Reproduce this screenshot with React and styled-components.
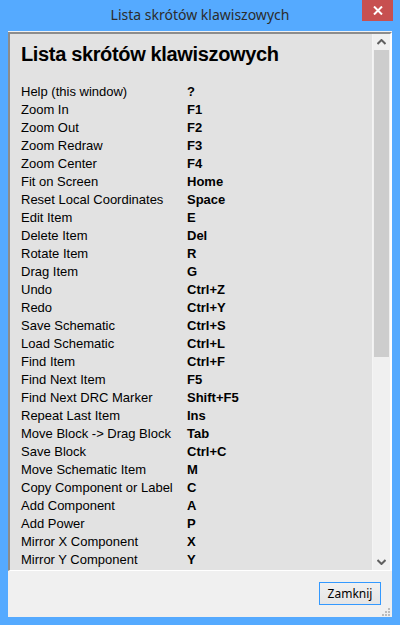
import React from "react";
import styled, { createGlobalStyle } from "styled-components";

const GlobalStyle = createGlobalStyle`
  html, body {
    margin: 0;
    padding: 0;
    background: #55aaff;
  }
  * {
    box-sizing: border-box;
  }
`;

const shortcuts = [
  ["Help (this window)", "?"],
  ["Zoom In", "F1"],
  ["Zoom Out", "F2"],
  ["Zoom Redraw", "F3"],
  ["Zoom Center", "F4"],
  ["Fit on Screen", "Home"],
  ["Reset Local Coordinates", "Space"],
  ["Edit Item", "E"],
  ["Delete Item", "Del"],
  ["Rotate Item", "R"],
  ["Drag Item", "G"],
  ["Undo", "Ctrl+Z"],
  ["Redo", "Ctrl+Y"],
  ["Save Schematic", "Ctrl+S"],
  ["Load Schematic", "Ctrl+L"],
  ["Find Item", "Ctrl+F"],
  ["Find Next Item", "F5"],
  ["Find Next DRC Marker", "Shift+F5"],
  ["Repeat Last Item", "Ins"],
  ["Move Block -> Drag Block", "Tab"],
  ["Save Block", "Ctrl+C"],
  ["Move Schematic Item", "M"],
  ["Copy Component or Label", "C"],
  ["Add Component", "A"],
  ["Add Power", "P"],
  ["Mirror X Component", "X"],
  ["Mirror Y Component", "Y"],
];

const App = () => {
  return (
    <>
      <GlobalStyle />
      <Window>
        <TitleBar>
          <span />
          <Title>Lista skrótów klawiszowych</Title>
          <CloseButton>
            <svg width="10" height="9" viewBox="0 0 10 9">
              <path d="M1 0.5 L9 8.5 M9 0.5 L1 8.5" stroke="#fff" strokeWidth="2" />
            </svg>
          </CloseButton>
        </TitleBar>

        <Client>
          <Panel>
            <Content>
              <Heading>Lista skrótów klawiszowych</Heading>
              <Table>
                {shortcuts.map(([label, key]) => (
                  <Row key={label}>
                    <Label>{label}</Label>
                    <Key>{key}</Key>
                  </Row>
                ))}
              </Table>
            </Content>
            <Scrollbar>
              <ScrollArrow>
                <svg width="9" height="6" viewBox="0 0 9 6">
                  <path d="M0.5 5 L4.5 1 L8.5 5" stroke="#606060" strokeWidth="2" fill="none" />
                </svg>
              </ScrollArrow>
              <Thumb />
              <Track />
              <ScrollArrow>
                <svg width="9" height="6" viewBox="0 0 9 6">
                  <path d="M0.5 1 L4.5 5 L8.5 1" stroke="#606060" strokeWidth="2" fill="none" />
                </svg>
              </ScrollArrow>
            </Scrollbar>
          </Panel>

          <Footer>
            <Button>Zamknij</Button>
          </Footer>

          <Grip>
            <svg width="10" height="10" viewBox="0 0 10 10">
              <rect x="7" y="1" width="2" height="2" fill="#bcbcbc" />
              <rect x="4" y="4" width="2" height="2" fill="#bcbcbc" />
              <rect x="7" y="4" width="2" height="2" fill="#bcbcbc" />
              <rect x="1" y="7" width="2" height="2" fill="#bcbcbc" />
              <rect x="4" y="7" width="2" height="2" fill="#bcbcbc" />
              <rect x="7" y="7" width="2" height="2" fill="#bcbcbc" />
            </svg>
          </Grip>
        </Client>
      </Window>
    </>
  );
};

export default App;

/* -------------------- Styled Components -------------------- */
const Window = styled.div`
  width: 400px;
  height: 625px;
  background: #55aaff;
  display: flex;
  flex-direction: column;
  overflow: hidden;
`;

const TitleBar = styled.div`
  height: 31px;
  display: grid;
  grid-template-columns: 1fr auto 1fr;
  align-items: start;
`;

const Title = styled.div`
  font-family: "Noto Sans", "Open Sans", sans-serif;
  font-size: 14px;
  color: #2c2c2c;
  line-height: 30px;
  white-space: nowrap;
`;

const CloseButton = styled.div`
  justify-self: end;
  margin-right: 7px;
  width: 31px;
  height: 21px;
  background: #c75050;
  display: flex;
  align-items: center;
  justify-content: center;
`;

const Client = styled.div`
  position: relative;
  flex: 1;
  margin: 0 8px 8px 8px;
  padding-top: 1px;
  background: #f0f0f0;
  display: flex;
  flex-direction: column;
`;

const Panel = styled.div`
  height: 539px;
  display: flex;
  border-top: 2px solid #8c8c8c;
  border-left: 2px solid #8c8c8c;
  border-right: 2px solid #ffffff;
  border-bottom: 1px solid #ffffff;
  background: #e2e2e2;
`;

const Content = styled.div`
  flex: 1;
  overflow: hidden;
  padding: 8px 0 0 11px;
  font-family: "Liberation Sans", Arial, sans-serif;
  color: #000;
`;

const Heading = styled.h1`
  margin: 0 0 17px 0;
  font-size: 20px;
  line-height: 24px;
  font-weight: bold;
  letter-spacing: -0.35px;
  white-space: nowrap;
`;

const Table = styled.div`
  display: flex;
  flex-direction: column;
`;

const Row = styled.div`
  display: grid;
  grid-template-columns: 166px 1fr;
  height: 18px;
  font-size: 13px;
  line-height: 18px;
  white-space: nowrap;
`;

const Label = styled.span``;

const Key = styled.span`
  font-weight: bold;
`;

const Scrollbar = styled.div`
  width: 18px;
  border-left: 1px solid #f4f4f4;
  background: #f0f0f0;
  display: flex;
  flex-direction: column;
`;

const ScrollArrow = styled.div`
  height: 16px;
  display: flex;
  align-items: center;
  justify-content: center;
`;

const Thumb = styled.div`
  height: 307px;
  margin: 0 1px;
  background: #cdcdcd;
`;

const Track = styled.div`
  flex: 1;
`;

const Footer = styled.div`
  flex: 1;
  display: flex;
  justify-content: flex-end;
  align-items: flex-start;
  padding: 11px 11px 0 0;
`;

const Button = styled.button`
  width: 62px;
  height: 23px;
  padding: 0;
  border: 1px solid #3399ff;
  background: linear-gradient(#f0f0f0, #e5e5e5);
  font-family: "Noto Sans", "Open Sans", sans-serif;
  font-size: 12px;
  color: #000;
  cursor: pointer;
`;

const Grip = styled.div`
  position: absolute;
  right: 1px;
  bottom: 0px;
  width: 10px;
  height: 10px;
  display: flex;
`;
